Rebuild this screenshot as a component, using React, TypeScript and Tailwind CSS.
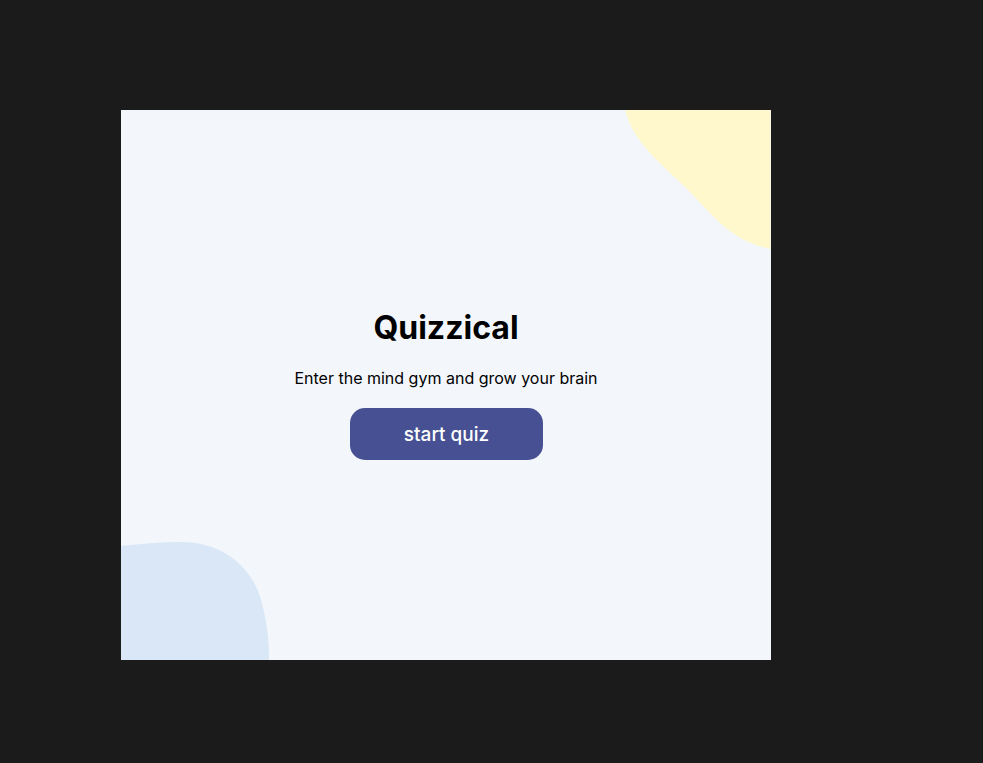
const App = () => {
  return (
    <div className="min-h-screen w-full bg-[#1b1b1b] pt-[110px] pl-[121px]" style={{ fontFamily: 'Inter, "Noto Sans", sans-serif' }}>
      <main className="relative flex h-[550px] w-[650px] flex-col items-center justify-center overflow-hidden bg-[#f3f6fb] pb-[2px]">
        {/* decorative blobs */}
        <svg className="absolute right-0 top-0" width="146" height="140" viewBox="505 0 145 140">
          <path d="M505,0 C510,25 530,45 555,68 C590,100 605,130 650,139 L650,0 Z" fill="#fff8cc" />
        </svg>
        <svg className="absolute bottom-0 left-0" width="150" height="120" viewBox="0 430 150 120">
          <path d="M0,436 C20,434 40,432 60,432 C100,432 130,455 140,490 C147,515 148,535 148,550 L0,550 Z" fill="#d9e7f6" />
        </svg>

        <div className="relative z-10 flex flex-col items-center">
          <h1 className="text-[32px] font-bold leading-[38px] text-black">Quizzical</h1>
          <p className="mt-[21px] text-base leading-[20px] text-black">Enter the mind gym and grow your brain</p>
          <button className="ml-px mt-[20px] h-[52px] w-[193px] rounded-[15px] bg-[#465092] pt-[3px] text-[19px] font-medium text-white">
            start quiz
          </button>
        </div>
      </main>
    </div>
  );
};

export default App;
